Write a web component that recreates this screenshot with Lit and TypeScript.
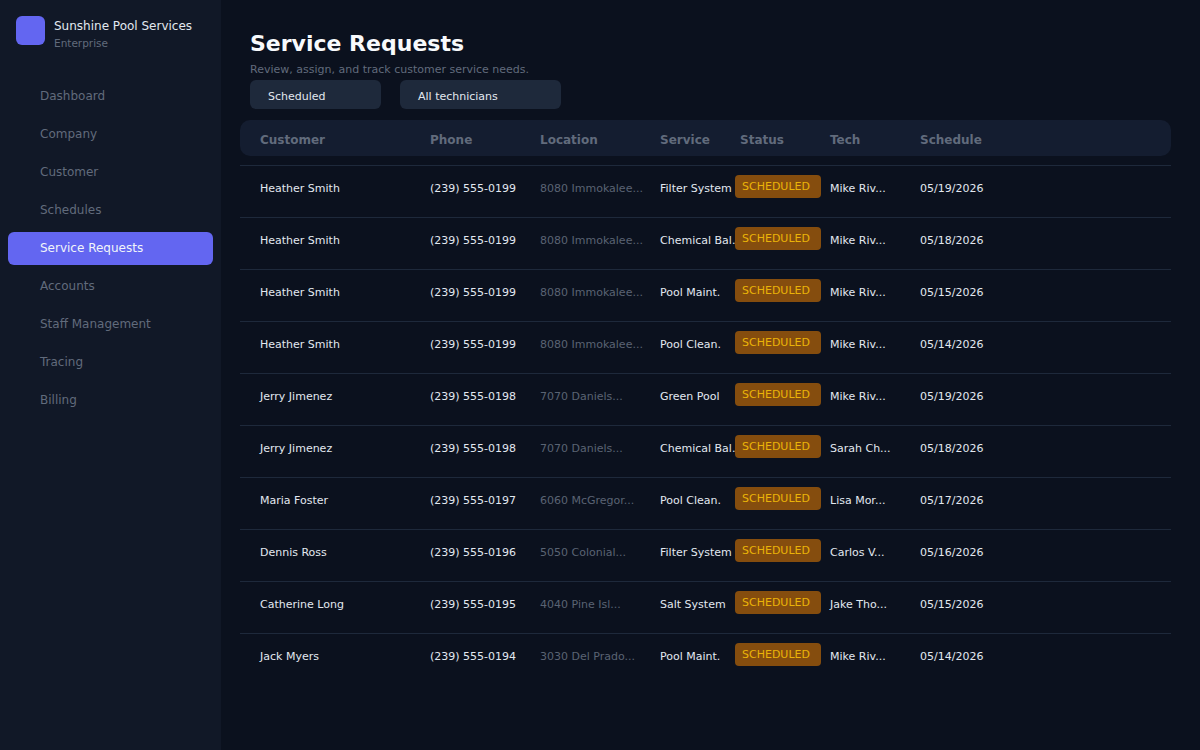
import { LitElement, html, css } from 'lit';
import { customElement, state } from 'lit/decorators.js';

interface RequestRow {
  customer: string;
  phone: string;
  location: string;
  service: string;
  tech: string;
  schedule: string;
}

const HEATHER = { customer: 'Heather Smith', phone: '(239) 555-0199', location: '8080 Immokalee...' };
const JERRY = { customer: 'Jerry Jimenez', phone: '(239) 555-0198', location: '7070 Daniels...' };

const ROWS: RequestRow[] = [
  { ...HEATHER, service: 'Filter System', tech: 'Mike Riv...', schedule: '05/19/2026' },
  { ...HEATHER, service: 'Chemical Bal.', tech: 'Mike Riv...', schedule: '05/18/2026' },
  { ...HEATHER, service: 'Pool Maint.', tech: 'Mike Riv...', schedule: '05/15/2026' },
  { ...HEATHER, service: 'Pool Clean.', tech: 'Mike Riv...', schedule: '05/14/2026' },
  { ...JERRY, service: 'Green Pool', tech: 'Mike Riv...', schedule: '05/19/2026' },
  { ...JERRY, service: 'Chemical Bal.', tech: 'Sarah Ch...', schedule: '05/18/2026' },
  { customer: 'Maria Foster', phone: '(239) 555-0197', location: '6060 McGregor...', service: 'Pool Clean.', tech: 'Lisa Mor...', schedule: '05/17/2026' },
  { customer: 'Dennis Ross', phone: '(239) 555-0196', location: '5050 Colonial...', service: 'Filter System', tech: 'Carlos V...', schedule: '05/16/2026' },
  { customer: 'Catherine Long', phone: '(239) 555-0195', location: '4040 Pine Isl...', service: 'Salt System', tech: 'Jake Tho...', schedule: '05/15/2026' },
  { customer: 'Jack Myers', phone: '(239) 555-0194', location: '3030 Del Prado...', service: 'Pool Maint.', tech: 'Mike Riv...', schedule: '05/14/2026' },
];

const NAV = ['Dashboard', 'Company', 'Customer', 'Schedules', 'Service Requests', 'Accounts', 'Staff Management', 'Tracing', 'Billing'];
const COLUMNS = ['Customer', 'Phone', 'Location', 'Service', 'Status', 'Tech', 'Schedule'];

@customElement('app-root')
export class AppRoot extends LitElement {
  @state()
  private active: string = 'Service Requests';

  static styles = css`
    :host {
      display: flex;
      width: 1200px;
      height: 750px;
      overflow: hidden;
      background: #0b111e;
      font-family: 'DejaVu Sans', sans-serif;
      color: #e2e8f0;
    }

    .sidebar {
      width: 221px;
      flex: none;
      background: #111827;
      box-sizing: border-box;
    }

    .brand {
      display: flex;
      gap: 9px;
      padding: 16px 16px 0;
      height: 45px;
    }

    .logo {
      width: 29px;
      height: 29px;
      border-radius: 6px;
      background: #6366f1;
    }

    .brand-name {
      font-size: 12px;
      line-height: 14px;
      margin-top: 3px;
      color: #e2e8f0;
    }

    .brand-plan {
      font-size: 10.5px;
      line-height: 13px;
      margin-top: 4px;
      color: #616b7c;
    }

    .nav {
      display: flex;
      flex-direction: column;
      gap: 5px;
      padding: 0 8px;
      margin-top: 19px;
      width: 205px;
    }

    .nav-item {
      height: 33px;
      line-height: 33px;
      padding-left: 32px;
      font-size: 12px;
      color: #616b7c;
      border-radius: 6px;
    }

    .nav-item.active {
      background: #6366f1;
      color: #f1f5f9;
    }

    .main {
      flex: 1;
      padding: 31px 29px 0 19px;
      min-width: 0;
    }

    .heading {
      padding-left: 10px;
    }

    h1 {
      margin: 0;
      font-size: 22px;
      line-height: 26px;
      font-weight: 700;
      color: #f8fafc;
    }

    .subtitle {
      margin-top: 6px;
      font-size: 11px;
      line-height: 14px;
      color: #616b7c;
    }

    .filters {
      display: flex;
      gap: 19px;
      margin-top: 3px;
      padding-left: 10px;
    }

    .filter {
      height: 29px;
      line-height: 33px;
      padding-left: 18px;
      box-sizing: border-box;
      font-size: 11px;
      color: #e2e8f0;
      background: #1e293b;
      border-radius: 6px;
    }

    .filter.status {
      width: 131px;
    }

    .filter.tech {
      width: 161px;
    }

    .table {
      margin-top: 11px;
    }

    .row,
    .head {
      display: grid;
      grid-template-columns: 190px 110px 120px 80px 90px 90px 1fr;
    }

    .head {
      height: 36px;
      line-height: 41px;
      background: #141d30;
      border-radius: 10px;
      font-size: 12px;
      font-weight: 700;
      color: #616b7c;
      margin-bottom: 9px;
    }

    .head > span:first-child,
    .row > span:first-child {
      padding-left: 20px;
    }

    .row {
      height: 52px;
      box-sizing: border-box;
      border-top: 1px solid #1e293b;
      font-size: 11px;
      line-height: 13px;
      color: #e2e8f0;
    }

    .row > span {
      padding-top: 16px;
      white-space: nowrap;
    }

    .row > .location {
      color: #5a6373;
    }

    .row > .status-cell {
      padding-top: 9px;
    }

    .badge {
      display: block;
      position: relative;
      width: 86px;
      height: 23px;
      margin-left: -5px;
      padding-left: 7px;
      box-sizing: border-box;
      line-height: 23px;
      font-size: 11px;
      color: #eab308;
      background: #854d0e;
      border-radius: 4px;
    }
  `;

  render() {
    return html`
      <aside class="sidebar">
        <div class="brand">
          <div class="logo"></div>
          <div>
            <div class="brand-name">Sunshine Pool Services</div>
            <div class="brand-plan">Enterprise</div>
          </div>
        </div>
        <nav class="nav">
          ${NAV.map(
            (item) => html`<div class="nav-item ${item === this.active ? 'active' : ''}">${item}</div>`
          )}
        </nav>
      </aside>
      <main class="main">
        <div class="heading">
          <h1>Service Requests</h1>
          <div class="subtitle">Review, assign, and track customer service needs.</div>
        </div>
        <div class="filters">
          <div class="filter status">Scheduled</div>
          <div class="filter tech">All technicians</div>
        </div>
        <div class="table">
          <div class="head">
            ${COLUMNS.map((col) => html`<span>${col}</span>`)}
          </div>
          ${ROWS.map(
            (row) => html`
              <div class="row">
                <span>${row.customer}</span>
                <span>${row.phone}</span>
                <span class="location">${row.location}</span>
                <span>${row.service}</span>
                <span class="status-cell"><span class="badge">SCHEDULED</span></span>
                <span>${row.tech}</span>
                <span>${row.schedule}</span>
              </div>
            `
          )}
        </div>
      </main>
    `;
  }
}
